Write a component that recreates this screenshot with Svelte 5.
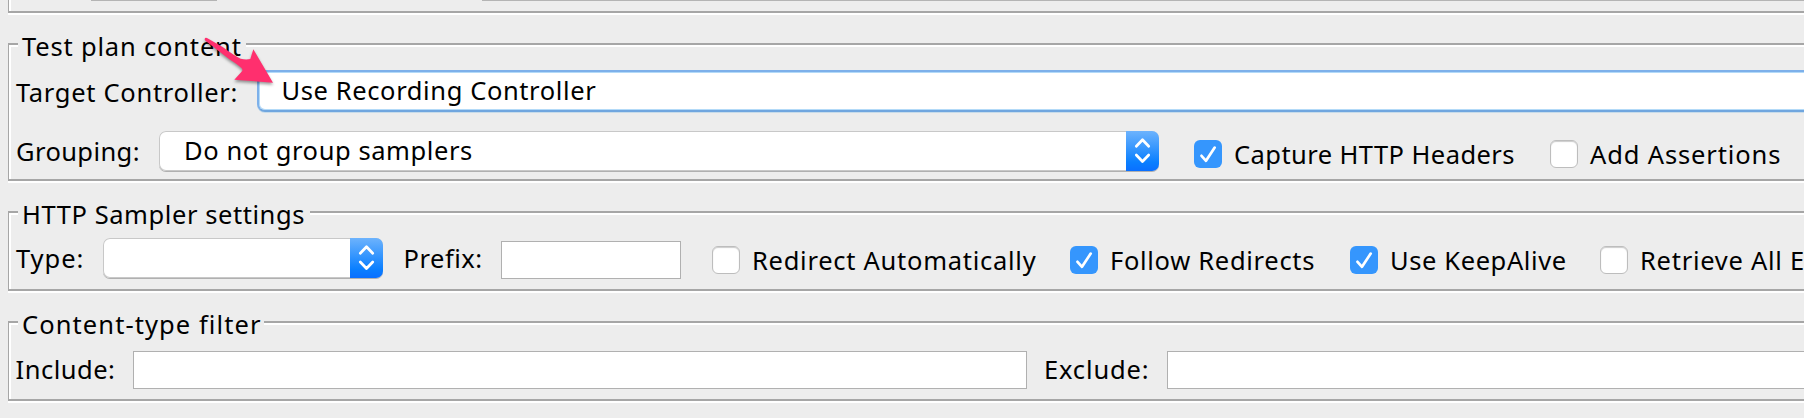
<script>
  const chevrons = 'M10.3 15.3L16.5 8.8L22.7 15.3M10.3 24L16.5 30.5L22.7 24';
</script>

{#snippet label(text, spacing, width)}
  <span class="label" style="letter-spacing:{spacing}px;width:{width}px">{text}</span>
{/snippet}

{#snippet check(text, spacing, checked, width)}
  <label class="check" style="width:{width}px">
    <span class="box" class:checked>
      {#if checked}
        <svg viewBox="0 0 28 28"><path d="M7.5 15.8L12 20.8L20.7 7.6" /></svg>
      {/if}
    </span>
    <span class="check-text" style="letter-spacing:{spacing}px">{text}</span>
  </label>
{/snippet}

{#snippet combo(text, width, spacing)}
  <div class="combo" style="width:{width}px">
    <span class="value" style="letter-spacing:{spacing}px">{text}</span>
    <span class="button"><svg viewBox="0 0 33 40"><path d={chevrons} /></svg></span>
  </div>
{/snippet}

{#snippet title(text, spacing, width)}
  <div class="title">
    <i class="rule start"></i>
    <span class="title-text" style="letter-spacing:{spacing}px;width:{width}px">{text}</span>
    <i class="rule"></i>
  </div>
{/snippet}

<main>
  <section class="group previous">
    <i class="edge first"></i><i class="edge second"></i>
  </section>

  <section class="group plan">
    {@render title('Test plan content', 0.82, 228)}
    <div class="row target">
      {@render label('Target Controller:', 0.7, 240.5)}
      <div class="focused">Use Recording Controller</div>
    </div>
    <div class="row grouping">
      {@render label('Grouping:', 0.4, 143)}
      {@render combo('Do not group samplers', 1000, 0.58)}
      <div class="checks">
        {@render check('Capture HTTP Headers', 0.43, true, 356)}
        {@render check('Add Assertions', 0.87, false, 254)}
      </div>
    </div>
  </section>

  <section class="group sampler">
    {@render title('HTTP Sampler settings', 0.57, 292)}
    <div class="row settings">
      {@render label('Type:', 0.95, 87)}
      {@render combo('', 280, 0)}
      <span class="gap"></span>
      {@render label('Prefix:', 0.52, 97.5)}
      <div class="field prefix"></div>
      <div class="checks">
        {@render check('Redirect Automatically', 0.73, false, 358)}
        {@render check('Follow Redirects', 0.7, true, 280)}
        {@render check('Use KeepAlive', 0.6, true, 250)}
        {@render check('Retrieve All E', 0.73, false, 204)}
      </div>
    </div>
  </section>

  <section class="group filter">
    {@render title('Content-type filter', 1.08, 246)}
    <div class="row types">
      {@render label('Include:', 0.5, 117.5)}
      <div class="field include"></div>
      {@render label('Exclude:', 0.85, 123)}
      <div class="field exclude"></div>
    </div>
  </section>

  <svg class="arrow" viewBox="0 0 120 100">
    <path d="M44 57Q45 52 51 54L98 81Q137 110 152 116Q167 120 181 117L190 88L249 188L133 179L156 154Q159 150 155 145Q145 135 118 118L46 62Q43 59 44 57Z" transform="scale(.33333)" />
  </svg>
</main>

<style>
  :global(body) { background: #ededed; overflow: hidden; }
  main { position: relative; width: 1804px; height: 418px; overflow: hidden; background: #ededed; color: #000; font: 25.5px/34px "Noto Sans", sans-serif; white-space: nowrap; }
  .label, .check, .combo, .field, .focused, .gap { flex: none; }
  .group { border-bottom: 2px solid #a6a6a6; border-left: 1px solid #a6a6a6; box-shadow: inset 2px 0 #fff, 0 2px #fff; margin-left: 8px; box-sizing: border-box; }
  .title { display: flex; height: 4px; }
  .rule { flex: 1; background: linear-gradient(#a6a6a6 50%, #fff 50%); }
  .start { flex: none; width: 9px; }
  .title-text { flex: none; box-sizing: border-box; padding-left: 4px; margin-top: -14px; }

  .previous { display: flex; height: 13px; }
  .edge { height: 1px; background: #b4b4b4; }
  .first { width: 126px; margin-left: 82px; }
  .second { flex: 1; margin-left: 265px; }
  .plan { margin-top: 30px; height: 138px; }
  .sampler, .filter { margin-top: 30px; height: 80px; }

  .row { display: flex; align-items: flex-start; }
  .target { padding: 23px 0 0 7px; height: 61px; }
  .target .label { margin-top: 5px; }
  .grouping { padding-left: 7px; }
  .grouping .label { margin-top: 3px; }
  .settings { padding: 23px 0 0 7px; }
  .settings .label { margin-top: 3px; }
  .gap { width: 20.5px; }
  .types { padding: 26px 0 0 6.5px; }
  .types .label { margin-top: 1px; }
  .types .field + .label { margin-left: 17px; }

  .focused { width: 1600px; height: 42px; box-sizing: border-box; border: 2px solid #7db0ea; border-bottom-color: #70a6df; border-radius: 8px; background: #fff; box-shadow: inset 0 0 0 1px #b3daf8, 0 1px #c8dcea; padding: 1px 0 0 23px; letter-spacing: .61px; }
  .combo { display: flex; height: 40px; box-sizing: border-box; background: #fff; border-radius: 7px; box-shadow: inset 0 0 0 1px #c8c8c8, 0 1px #b0b0b0; overflow: hidden; }
  .value { flex: 1; padding: 2px 0 0 25px; }
  .button { width: 33px; height: 40px; background: linear-gradient(#6db3fd, #0a7fff 78%, #0a6fff); }
  .field { height: 38px; border: 1px solid #b0b0b0; background: #fff; box-sizing: border-box; }
  .prefix { width: 180px; margin-top: 3px; }
  .include { width: 894px; }
  .exclude { width: 700px; }

  .checks { display: flex; margin: 6px 0 0 35px; }
  .settings .checks { margin: 5px 0 0 31px; }
  .check { display: flex; align-items: flex-start; }
  .box { flex: none; width: 28px; height: 28px; margin: 3px 12px 0 0; box-sizing: border-box; border: 1px solid #bdbdbd; box-shadow: inset 0 1px 1px #ccc; border-radius: 6px; background: #fff; }
  .checked { border: 0; box-shadow: none; background: #3596fd; }
  svg { display: block; width: 100%; height: 100%; fill: none; stroke: #fff; stroke-width: 2.7; stroke-linecap: round; stroke-linejoin: round; }
  .arrow { position: absolute; left: 190px; top: 20px; width: 120px; height: 100px; filter: drop-shadow(0 2px 1.5px #0006); }
  .arrow path { fill: #ff2f6e; stroke: none; }
</style>
